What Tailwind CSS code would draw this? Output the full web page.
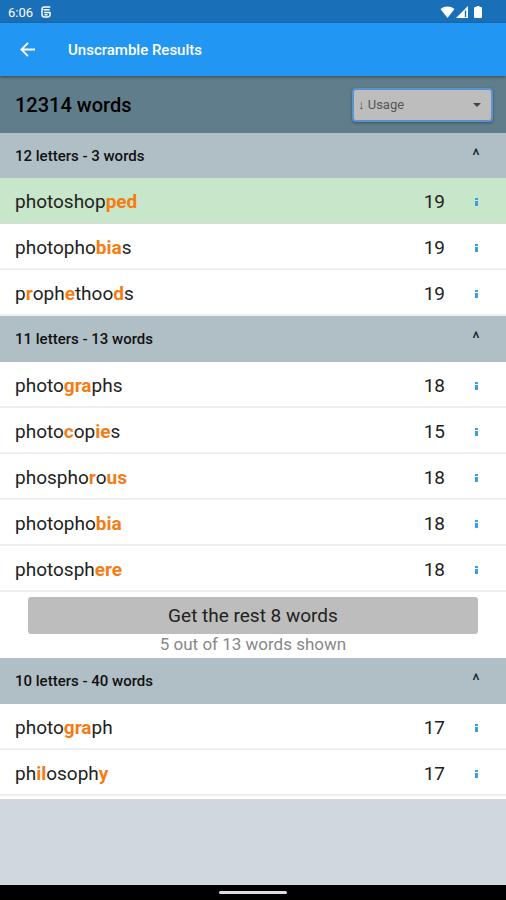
<!DOCTYPE html>
<html lang="en">
<head>
<meta charset="utf-8">
<meta name="viewport" content="width=device-width, initial-scale=1">
<title>Unscramble Results</title>
<script src="https://cdn.jsdelivr.net/npm/@tailwindcss/browser@4"></script>
</head>
<body class="flex min-h-screen flex-col bg-[#cfd8dc] font-[Roboto,sans-serif] text-[#222]">

<!-- System status bar -->
<div class="flex h-[23px] items-center bg-[#1a70b8] pl-2 pr-6 text-white">
  <span class="pt-[2px] text-[13px] leading-4">6:06</span>
  <svg class="ml-2 h-3 w-[10px]" viewBox="0 0 10 12" fill="none" stroke="currentColor" stroke-width="1.500" aria-hidden="true">
    <path d="M9.300 1H3.500Q1 1 1 3.200V8.500Q1 11 3.500 11H6.500Q9 11 9 8.700V6.500H3.200"/><path d="M2.500 3.800H8.500M3.500 8.700H6.500"/>
  </svg>
  <div class="ml-auto flex items-center">
    <svg class="h-3 w-[15px]" viewBox="0 0 15 12" fill="currentColor" aria-hidden="true"><path d="M0.500 3C4.500-.3 10.500-.3 14.500 3L7.500 12z"/></svg>
    <svg class="ml-px h-3 w-3" viewBox="0 0 12 12" fill="currentColor" aria-hidden="true"><path d="M12 0V12H0z"/><path d="M8.800 4.500h1.400V11H8.800z" fill="#1a70b8"/></svg>
    <svg class="ml-[6px] h-3 w-2" viewBox="0 0 8 12" fill="currentColor" aria-hidden="true"><path d="M2.500 0h3v1H7a1 1 0 0 1 1 1v9a1 1 0 0 1-1 1H1a1 1 0 0 1-1-1V2a1 1 0 0 1 1-1h1.500z"/></svg>
  </div>
</div>

<!-- App bar -->
<header class="relative flex h-[53px] items-center bg-[#2196f3] px-[18px] text-white shadow-[0_1px_3px_rgba(0,0,0,0.45)]">
  <button type="button" aria-label="Back" class="flex size-[18px] items-center justify-center">
    <svg class="size-[15px]" viewBox="0 0 16 16" fill="none" stroke="currentColor" stroke-width="2" aria-hidden="true"><path d="M16 8H2M8.500 1L1.500 8l7 7"/></svg>
  </button>
  <h1 class="ml-8 text-[15px] font-medium leading-5">Unscramble Results</h1>
</header>

<!-- Total and sort order -->
<div class="flex h-[57px] items-center justify-between bg-[#607d8b] pl-[15px] pr-[13px]">
  <h2 class="text-[20px] font-medium leading-6 text-black">12314 words</h2>
  <div class="relative">
    <select aria-label="Sort by" class="h-[34px] w-[141px] appearance-none rounded border-2 border-[#5b93cc] bg-[#bdbdbd] pl-1 pr-6 text-[13px] text-[#555] shadow-[0_1px_3px_rgba(0,0,0,0.35)]">
      <option>↓ Usage</option>
    </select>
    <svg class="pointer-events-none absolute right-3 top-[15px] h-1 w-2" viewBox="0 0 8 4" fill="#444" aria-hidden="true"><path d="M0 0h8L4 4z"/></svg>
  </div>
</div>

<main class="bg-white pb-[3px]">
  <section>
    <header class="flex h-[45px] items-center bg-[#b0bec5] pl-[15px] pr-[21px]">
      <h3 class="text-[15px] font-medium leading-5 text-[#111]">12 letters - 3 words</h3>
      <button type="button" aria-label="Collapse 12 letters" class="ml-auto w-[18px] text-center text-[18px] leading-4 text-[#222]">^</button>
    </header>
    <ul>
      <li class="flex h-[46px] items-center border-b-2 border-[#d0e2d2] bg-[#c8e6c9] pl-[15px] pr-[21px] pt-1"><span class="flex-1 text-[19px] leading-6">photoshop<b class="font-bold text-[#f57c14]">ped</b></span><span class="text-[19px] leading-6">19</span><button type="button" aria-label="About photoshopped" class="ml-[22px] flex w-[18px] justify-center pb-px"><svg class="h-2 w-[3px]" viewBox="0 0 3 8" fill="#3a9ee0"><path d="M0 0h3v2H0zM0 3h3v5H0z"/></svg></button></li>
      <li class="flex h-[46px] items-center border-b-2 border-[#eee] pl-[15px] pr-[21px] pt-1"><span class="flex-1 text-[19px] leading-6">photopho<b class="font-bold text-[#f57c14]">bia</b>s</span><span class="text-[19px] leading-6">19</span><button type="button" aria-label="About photophobias" class="ml-[22px] flex w-[18px] justify-center pb-px"><svg class="h-2 w-[3px]" viewBox="0 0 3 8" fill="#3a9ee0"><path d="M0 0h3v2H0zM0 3h3v5H0z"/></svg></button></li>
      <li class="flex h-[46px] items-center border-b-2 border-[#eee] pl-[15px] pr-[21px] pt-1"><span class="flex-1 text-[19px] leading-6">p<b class="font-bold text-[#f57c14]">r</b>oph<b class="font-bold text-[#f57c14]">e</b>thoo<b class="font-bold text-[#f57c14]">d</b>s</span><span class="text-[19px] leading-6">19</span><button type="button" aria-label="About prophethoods" class="ml-[22px] flex w-[18px] justify-center pb-px"><svg class="h-2 w-[3px]" viewBox="0 0 3 8" fill="#3a9ee0"><path d="M0 0h3v2H0zM0 3h3v5H0z"/></svg></button></li>
    </ul>
  </section>

  <section>
    <header class="flex h-[46px] items-center bg-[#b0bec5] pl-[15px] pr-[21px]">
      <h3 class="text-[15px] font-medium leading-5 text-[#111]">11 letters - 13 words</h3>
      <button type="button" aria-label="Collapse 11 letters" class="ml-auto w-[18px] text-center text-[18px] leading-4 text-[#222]">^</button>
    </header>
    <ul>
      <li class="flex h-[46px] items-center border-b-2 border-[#eee] pl-[15px] pr-[21px] pt-1"><span class="flex-1 text-[19px] leading-6">photo<b class="font-bold text-[#f57c14]">gra</b>phs</span><span class="text-[19px] leading-6">18</span><button type="button" aria-label="About photographs" class="ml-[22px] flex w-[18px] justify-center pb-px"><svg class="h-2 w-[3px]" viewBox="0 0 3 8" fill="#3a9ee0"><path d="M0 0h3v2H0zM0 3h3v5H0z"/></svg></button></li>
      <li class="flex h-[46px] items-center border-b-2 border-[#eee] pl-[15px] pr-[21px] pt-1"><span class="flex-1 text-[19px] leading-6">photo<b class="font-bold text-[#f57c14]">c</b>op<b class="font-bold text-[#f57c14]">ie</b>s</span><span class="text-[19px] leading-6">15</span><button type="button" aria-label="About photocopies" class="ml-[22px] flex w-[18px] justify-center pb-px"><svg class="h-2 w-[3px]" viewBox="0 0 3 8" fill="#3a9ee0"><path d="M0 0h3v2H0zM0 3h3v5H0z"/></svg></button></li>
      <li class="flex h-[46px] items-center border-b-2 border-[#eee] pl-[15px] pr-[21px] pt-1"><span class="flex-1 text-[19px] leading-6">phospho<b class="font-bold text-[#f57c14]">r</b>o<b class="font-bold text-[#f57c14]">us</b></span><span class="text-[19px] leading-6">18</span><button type="button" aria-label="About phosphorous" class="ml-[22px] flex w-[18px] justify-center pb-px"><svg class="h-2 w-[3px]" viewBox="0 0 3 8" fill="#3a9ee0"><path d="M0 0h3v2H0zM0 3h3v5H0z"/></svg></button></li>
      <li class="flex h-[46px] items-center border-b-2 border-[#eee] pl-[15px] pr-[21px] pt-1"><span class="flex-1 text-[19px] leading-6">photopho<b class="font-bold text-[#f57c14]">bia</b></span><span class="text-[19px] leading-6">18</span><button type="button" aria-label="About photophobia" class="ml-[22px] flex w-[18px] justify-center pb-px"><svg class="h-2 w-[3px]" viewBox="0 0 3 8" fill="#3a9ee0"><path d="M0 0h3v2H0zM0 3h3v5H0z"/></svg></button></li>
      <li class="flex h-[46px] items-center border-b-2 border-[#eee] pl-[15px] pr-[21px] pt-1"><span class="flex-1 text-[19px] leading-6">photosph<b class="font-bold text-[#f57c14]">ere</b></span><span class="text-[19px] leading-6">18</span><button type="button" aria-label="About photosphere" class="ml-[22px] flex w-[18px] justify-center pb-px"><svg class="h-2 w-[3px]" viewBox="0 0 3 8" fill="#3a9ee0"><path d="M0 0h3v2H0zM0 3h3v5H0z"/></svg></button></li>
    </ul>
    <div class="px-7 pb-[3px] pt-[5px]">
      <button type="button" class="block h-[37px] w-full rounded-[3px] bg-[#bdbdbd] text-[19px] leading-6 text-[#222]">Get the rest 8 words</button>
      <p class="text-center text-[17px] leading-[21px] text-[#888]">5 out of 13 words shown</p>
    </div>
  </section>

  <section>
    <header class="flex h-[46px] items-center bg-[#b0bec5] pl-[15px] pr-[21px]">
      <h3 class="text-[15px] font-medium leading-5 text-[#111]">10 letters - 40 words</h3>
      <button type="button" aria-label="Collapse 10 letters" class="ml-auto w-[18px] text-center text-[18px] leading-4 text-[#222]">^</button>
    </header>
    <ul>
      <li class="flex h-[46px] items-center border-b-2 border-[#eee] pl-[15px] pr-[21px] pt-1"><span class="flex-1 text-[19px] leading-6">photo<b class="font-bold text-[#f57c14]">gra</b>ph</span><span class="text-[19px] leading-6">17</span><button type="button" aria-label="About photograph" class="ml-[22px] flex w-[18px] justify-center pb-px"><svg class="h-2 w-[3px]" viewBox="0 0 3 8" fill="#3a9ee0"><path d="M0 0h3v2H0zM0 3h3v5H0z"/></svg></button></li>
      <li class="flex h-[46px] items-center border-b-2 border-[#eee] pl-[15px] pr-[21px] pt-1"><span class="flex-1 text-[19px] leading-6">ph<b class="font-bold text-[#f57c14]">il</b>osoph<b class="font-bold text-[#f57c14]">y</b></span><span class="text-[19px] leading-6">17</span><button type="button" aria-label="About philosophy" class="ml-[22px] flex w-[18px] justify-center pb-px"><svg class="h-2 w-[3px]" viewBox="0 0 3 8" fill="#3a9ee0"><path d="M0 0h3v2H0zM0 3h3v5H0z"/></svg></button></li>
    </ul>
  </section>
</main>

<!-- System gesture bar -->
<div class="mt-auto flex h-[15px] items-center justify-center bg-black">
  <div class="h-[3px] w-[68px] rounded-sm bg-[#ddd]"></div>
</div>
</body>
</html>
